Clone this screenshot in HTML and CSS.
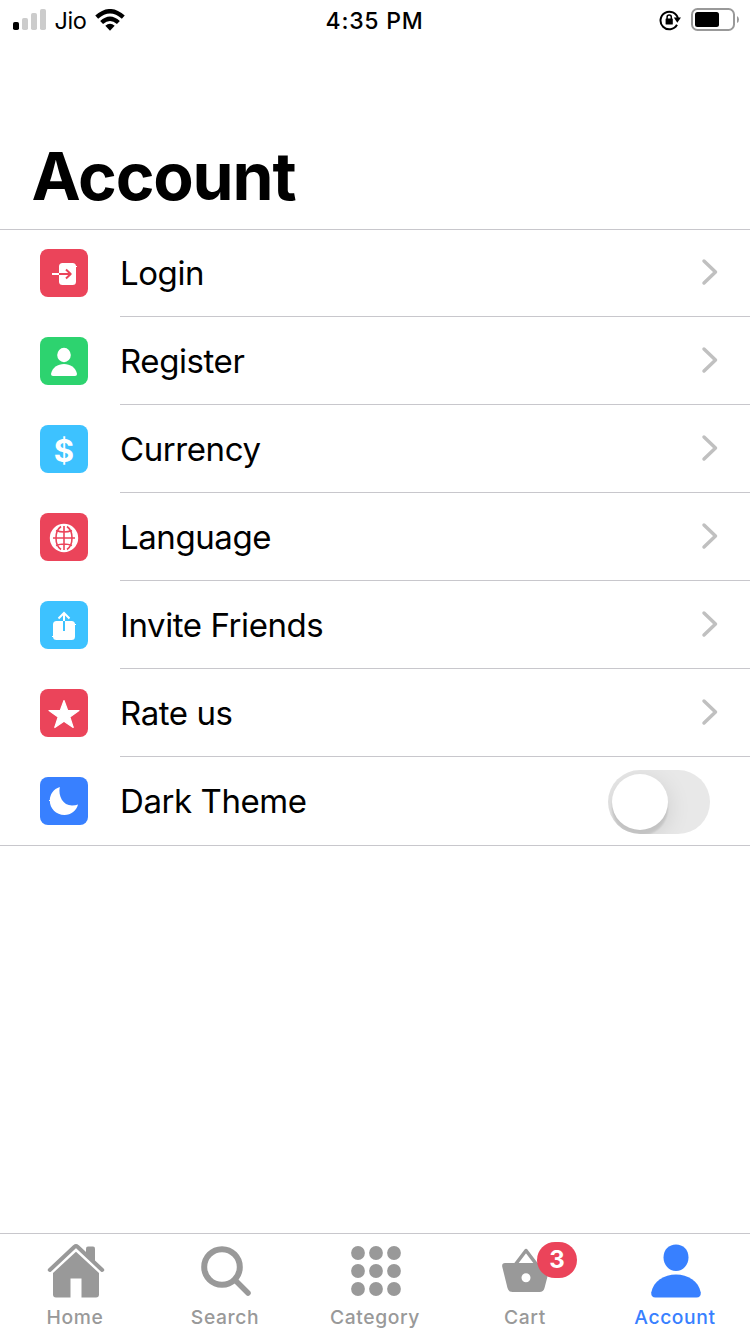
FILE: index.html
```
<!DOCTYPE html>
<html lang="en">
<head>
<meta charset="utf-8">
<title>Account</title>
<link rel="stylesheet" href="styles.css">
</head>
<body>
<div class="screen">
  <header class="status">
    <div class="status-left">
      <svg class="signal" width="34" height="24" viewBox="0 0 34 24">
        <rect x="0" y="13" width="6" height="8" rx="1.8" fill="#000"/>
        <g fill="#ccc"><rect x="9" y="9" width="6" height="12" rx="1.8"/><rect x="18" y="4" width="6" height="17" rx="1.8"/><rect x="27" y="0" width="6" height="21" rx="1.8"/></g>
      </svg>
      <span class="carrier">Jio</span>
      <svg class="wifi" width="30" height="22" viewBox="0 0 30 22">
        <g fill="none" stroke="#000" stroke-width="4.300"><path d="M1.700 8.200Q15-3.800 28.300 8.200"/><path d="M6.600 13.500Q15 5.800 23.400 13.500"/></g>
        <path d="M10.300 16.800Q15 12.600 19.700 16.800L15 21.700Z"/>
      </svg>
    </div>
    <span class="clock">4:35 PM</span>
    <div class="status-right">
      <svg class="lock" width="24" height="22" viewBox="0 0 24 22">
        <path d="M18 15.800A8.800 8.800 0 1 1 18.900 9.500" fill="none" stroke="#000" stroke-width="2"/>
        <path d="M14.800 8.500H22L18.300 13.700Z"/>
        <rect x="6.600" y="9.500" width="7.200" height="6" rx=".6"/>
        <path d="M8.100 10V8.200a2.100 2.100 0 0 1 4.200 0V10" fill="none" stroke="#000" stroke-width="1.500"/>
      </svg>
      <svg class="battery" width="49" height="24" viewBox="0 0 49 24">
        <rect x="1" y="1" width="42" height="21" rx="5.500" fill="none" stroke="#999" stroke-width="2"/>
        <rect x="4" y="4" width="24" height="15" rx="2.500"/>
        <path d="M46 8Q48 9 48 11.500T46 15Z" fill="#999"/>
      </svg>
    </div>
  </header>
  <h1 class="title">Account</h1>

  <main class="list">
    <div class="row first">
      <svg class="icon red" viewBox="0 0 48 48">
        <rect x="19" y="14" width="17" height="22" rx="3.500" fill="#fff"/><rect x="35" y="17" width="2" height="1" fill="#fff"/>
        <path d="M12 25H19" stroke="#fff" stroke-width="2"/>
        <path d="M19 25H30.500M26 20.500L30.700 25L26 29.500" fill="none" stroke="#eb445a" stroke-width="2" stroke-linejoin="round"/>
      </svg>
      <div class="cell"><span class="label">Login</span><svg class="chevron" viewBox="0 0 20 30"><path d="M4 4L15.500 15L4 26"/></svg></div>
    </div>
    <div class="row">
      <svg class="icon green" viewBox="0 0 48 48" fill="#fff">
        <ellipse cx="24" cy="18" rx="6.800" ry="7.200"/><path d="M13 39Q11 39 11 37C12 30.500 18 27 24 27S36 30.500 37 37Q37 39 35 39Z"/>
      </svg>
      <div class="cell"><span class="label">Register</span><svg class="chevron" viewBox="0 0 20 30"><path d="M4 4L15.500 15L4 26"/></svg></div>
    </div>
    <div class="row">
      <div class="icon blue dollar">$</div>
      <div class="cell"><span class="label">Currency</span><svg class="chevron" viewBox="0 0 20 30"><path d="M4 4L15.500 15L4 26"/></svg></div>
    </div>
    <div class="row">
      <svg class="icon red" viewBox="0 0 48 48">
        <circle cx="24" cy="25" r="14.200" fill="#fff"/>
        <g fill="none" stroke="#eb445a" stroke-width="1.600"><path d="M24 13V37M13 25H35M16 17.500Q24 20.500 32 17.500M16 32.500Q24 29.500 32 32.500M21 13.500Q16 17 16 25T21 36.500M27 13.500Q32 17 32 25T27 36.500"/></g>
      </svg>
      <div class="cell"><span class="label">Language</span><svg class="chevron" viewBox="0 0 20 30"><path d="M4 4L15.500 15L4 26"/></svg></div>
    </div>
    <div class="row">
      <svg class="icon blue" viewBox="0 0 48 48">
        <rect x="13" y="20" width="22" height="19" rx="3.500" fill="#fff"/><path d="M12 35.500H14M34 23.500H36" stroke="#fff"/>
        <path d="M24 20V12M18.500 17.500L24 12L29.500 17.500" fill="none" stroke="#fff" stroke-width="2"/>
        <path d="M24 20V30" stroke="#3dc2ff" stroke-width="2"/>
      </svg>
      <div class="cell"><span class="label">Invite Friends</span><svg class="chevron" viewBox="0 0 20 30"><path d="M4 4L15.500 15L4 26"/></svg></div>
    </div>
    <div class="row">
      <svg class="icon red" viewBox="0 0 48 48">
        <path d="M24 11.500L27.700 21.500H39L29.900 28.100L33.200 38.500L24 32.200L14.800 38.500L18.100 28.100L9 21.500H20.300Z" fill="#fff" stroke="#fff" stroke-width="1.200" stroke-linejoin="round"/>
      </svg>
      <div class="cell"><span class="label">Rate us</span><svg class="chevron" viewBox="0 0 20 30"><path d="M4 4L15.500 15L4 26"/></svg></div>
    </div>
    <div class="row last">
      <svg class="icon navy" viewBox="0 0 48 48">
        <path d="M19.800 10C18 19 23 28.500 32 28.500Q35.500 28.500 38 27.500C36.500 33.500 31 38 24.500 38C16 38 9.800 31.500 9.800 23.500C9.800 17.500 13.500 12 19.800 10Z" fill="#fff"/><path d="M9 23.500H11" stroke="#fff"/>
      </svg>
      <div class="cell"><span class="label">Dark Theme</span><span class="toggle"><span class="knob"></span></span></div>
    </div>
  </main>

  <nav class="tabs">
    <div class="tab">
      <svg viewBox="0 0 60 60" fill="#999">
        <path d="M4.800 31L29.500 7.800Q31 6.500 32.500 7.800L57.200 31" transform="translate(0 -1)" fill="none" stroke="#999" stroke-width="4" stroke-linecap="round" stroke-linejoin="round"/>
        <path d="M41 13V8.500Q41 6.500 43 6.500H48Q50 6.500 50 8.500V22Z"/>
        <path d="M31 11.800L54 33V54.500Q54 57.500 51 57.500H36.500V38.500H25.500V57.500H11Q8 57.500 8 54.500V33Z"/>
      </svg>
      <span>Home</span>
    </div>
    <div class="tab">
      <svg viewBox="0 0 60 60" fill="none" stroke="#999">
        <circle cx="27" cy="27" r="17.800" stroke-width="6"/><path d="M40 40L53 53" stroke-width="5.500" stroke-linecap="round"/>
      </svg>
      <span>Search</span>
    </div>
    <div class="tab">
      <svg viewBox="0 0 60 60" fill="#999">
        <circle cx="13" cy="13" r="6.900"/><circle cx="31" cy="13" r="6.900"/><circle cx="49" cy="13" r="6.900"/>
        <circle cx="13" cy="31" r="6.900"/><circle cx="31" cy="31" r="6.900"/><circle cx="49" cy="31" r="6.900"/>
        <circle cx="13" cy="49" r="6.900"/><circle cx="31" cy="49" r="6.900"/><circle cx="49" cy="49" r="6.900"/>
      </svg>
      <span>Category</span>
    </div>
    <div class="tab">
      <svg viewBox="0 0 60 60">
        <path d="M20 25L31 10.500L42 25" fill="none" stroke="#999" stroke-width="3.500" stroke-linejoin="round"/>
        <path fill="#999" fill-rule="evenodd" d="M10 23H52Q56 23 55 27L49.500 48Q48.500 52 44.500 52H17.500Q13.500 52 12.500 48L7.300 27Q6.500 23 10 23ZM31 33.300A4.500 4.500 0 1 0 31 42.300A4.500 4.500 0 1 0 31 33.300Z"/>
      </svg>
      <span>Cart</span>
      <b class="badge">3</b>
    </div>
    <div class="tab active">
      <svg viewBox="0 0 60 60" fill="#3880ff">
        <path d="M31 4.500C38 4.500 43.500 9.500 43.500 17.500C43.500 25 38 31 31 31S18.500 25 18.500 17.500C18.500 9.500 24 4.500 31 4.500Z"/>
        <path d="M10.500 57.500Q6 57.500 6.200 52.500C8.500 41 19 34.500 31 34.500S53.500 41 55.800 52.500Q56 57.500 51.500 57.500Z"/>
      </svg>
      <span>Account</span>
    </div>
  </nav>
</div>
</body>
</html>
```
FILE: styles.css
```
* { box-sizing: border-box; }
body { margin: 0; background: #fff; color: #000; font-family: Inter, sans-serif; }
svg { display: block; flex: none; }
.screen { width: 750px; height: 1334px; display: flex; flex-direction: column; overflow: hidden; }

.status { height: 40px; display: grid; grid-template-columns: 1fr auto 1fr; align-items: center; padding: 0 10px 0 13px; }
.status-left, .status-right { display: flex; align-items: center; }
.status-right { justify-content: flex-end; gap: 8px; }
.signal { margin-top: 1px; }
.carrier { font-size: 23.5px; line-height: 36px; margin-left: 7.5px; padding-top: 2px; letter-spacing: -.4px; }
.wifi { margin: 0 0 1px 8.5px; }
.clock { font-size: 23px; line-height: 36px; padding: 2px 4px 0 0; font-weight: 500; letter-spacing: .75px; }
.lock { margin-bottom: 1px; }

.title { margin: 0; height: 189px; padding: 96px 0 0 31.5px; font-size: 66px; line-height: 80px; font-weight: 700; letter-spacing: -1.2px; }

.list { border-top: 1px solid #c8c7cc; border-bottom: 1px solid #c8c7cc; }
.row { height: 88px; display: flex; padding-left: 40px; }
.first { height: 87px; }
.icon { width: 48px; height: 48px; border-radius: 8px; margin: 20px 32px 0 0; flex: none; }
.first .icon { margin-top: 19px; }
.red { background: #eb445a; }
.green { background: #2dd36f; }
.blue { background: #3dc2ff; }
.navy { background: #3880ff; }
.dollar { color: #fff; font-size: 31px; line-height: 51px; font-weight: 700; text-align: center; }
.cell { flex: 1; display: flex; align-items: center; justify-content: space-between; border-bottom: 1px solid #c8c7cc; padding-right: 30px; }
.label { font-size: 33px; line-height: 44px; letter-spacing: -.42px; }
.last .cell { border-bottom: 0; padding-right: 40px; }
.chevron { width: 20px; height: 30px; margin-bottom: 2px; fill: none; stroke: #c0c0c0; stroke-width: 3.5; stroke-linecap: round; stroke-linejoin: round; }
.toggle { width: 102px; height: 64px; border-radius: 32px; background: #e8e8e8; padding: 4px; overflow: hidden; margin-top: 2px; }
.knob { display: block; width: 56px; height: 56px; border-radius: 50%; background: #fff; box-shadow: 0 6px 24px rgba(0,0,0,.12), 0 6px 2px rgba(0,0,0,.1); }

.tabs { margin-top: auto; height: 101px; border-top: 1px solid #c8c7cc; display: grid; grid-template-columns: repeat(5, 1fr); }
.tab { position: relative; display: flex; flex-direction: column; align-items: center; padding-top: 6px; color: #999; }
.tab svg { width: 60px; height: 60px; }
.tab span { font-size: 19.3px; line-height: 28px; font-weight: 500; letter-spacing: .6px; margin-top: 3px; }
.tab.active { color: #3880ff; }
.badge { position: absolute; left: 87px; top: 8px; width: 40px; height: 36px; border-radius: 18px; background: #eb445a; color: #fff; font-size: 24px; line-height: 36px; text-align: center; }
```
